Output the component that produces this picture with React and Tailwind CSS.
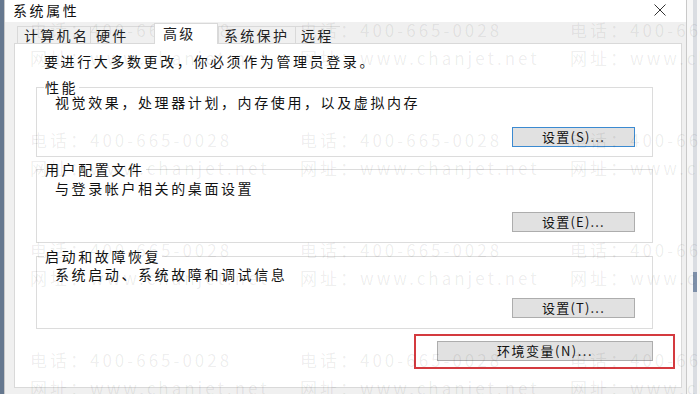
import React from "react";

const tabs = [
  { label: "计算机名", w: "w-[73px]", pl: "pl-[6px]" },
  { label: "硬件", w: "w-[64px]", pl: "pl-[5px]" },
  { label: "高级", w: "w-[64px]", pl: "pl-[8px]", active: true },
  { label: "系统保护", w: "w-[77px]", pl: "pl-[5px]" },
  { label: "远程", w: "w-[45px]", pl: "pl-[5px]" },
];

const Tab = ({ tab }) =>
  tab.active ? (
    <div
      className={`${tab.w} ${tab.pl} h-[21px] -mb-px relative z-10 bg-white border border-b-0 border-[#d9d9d9] leading-[18px]`}
    >
      {tab.label}
    </div>
  ) : (
    <div
      className={`${tab.w} ${tab.pl} h-[17px] bg-[#f0f0f0] border border-b-0 border-r-0 border-[#d9d9d9] leading-[16px]`}
    >
      {tab.label}
    </div>
  );

const SettingsButton = ({ children, focused }) => (
  <button
    className={`w-[123px] h-[20px] self-end mr-[17px] bg-[#e1e1e1] border text-[13px] tracking-[1.2px] leading-[18px] ${
      focused ? "border-[#3b8ad1]" : "border-[#adadad]"
    }`}
  >
    {children}
  </button>
);

const Group = ({ title, desc, button, focused, className, descGap, btnGap, pb }) => (
  <fieldset
    className={`border border-[#dcdcdc] flex flex-col ${className} ${pb}`}
  >
    <legend className="ml-[7px] px-[1px] leading-[18px]">{title}</legend>
    <div className={`ml-[18px] leading-[18px] ${descGap}`}>{desc}</div>
    <div className={`flex flex-col ${btnGap}`}>
      <SettingsButton focused={focused}>{button}</SettingsButton>
    </div>
  </fieldset>
);

const Watermark = () => {
  const cells = Array.from({ length: 12 });
  return (
    <div className="absolute inset-0 pointer-events-none pl-[30px] pt-[19px] grid grid-cols-[repeat(3,270px)] auto-rows-[110px] text-[17px] tracking-[3px] text-black/[0.075] whitespace-nowrap">
      {cells.map((_, i) => (
        <div key={i} className="flex flex-col gap-[6px] leading-[22px]">
          <span>电话：400-665-0028</span>
          <span>网址：www.chanjet.net</span>
        </div>
      ))}
    </div>
  );
};

const App = () => {
  return (
    <div className="relative w-[700px] h-[394px] overflow-hidden bg-white flex font-['Noto_Sans_CJK_SC',sans-serif] text-[14px] tracking-[2.6px] text-[#111]">
      {/* left edge of the window behind */}
      <div className="w-[4px] bg-[#66788f]" />

      <div className="flex-1 flex flex-col border-l border-r border-[#c9c9c9] bg-[#f0f0f0]">
        {/* title bar */}
        <div className="h-[22px] bg-white flex items-center justify-between pl-[8px] pr-[20px] pb-[3px]">
          <span className="leading-[18px]">系统属性</span>
          <svg width="12" height="12" viewBox="0 0 12 12">
            <path d="M0.5 0.5 L11.5 11.5 M11.5 0.5 L0.5 11.5" stroke="#333" strokeWidth="1" />
          </svg>
        </div>

        {/* tabs */}
        <div className="flex items-end h-[21px] pl-[12px] text-[#222] tracking-[2.3px]">
          {tabs.map((t) => (
            <Tab key={t.label} tab={t} />
          ))}
        </div>

        {/* tab panel */}
        <div className="flex-1 ml-[9px] mr-[4px] mb-[6px] bg-white border border-[#d9d9d9] flex flex-col pl-[21px] pr-[28px]">
          <div className="mt-[8px] ml-[8px] leading-[18px]">
            要进行大多数更改，你必须作为管理员登录。
          </div>

          <Group
            title="性能"
            desc="视觉效果，处理器计划，内存使用，以及虚拟内存"
            button="设置(S)..."
            focused
            className="mt-[8px]"
            descGap="-mt-[3px]"
            btnGap="mt-[16px]"
            pb="pb-[9px]"
          />

          <Group
            title="用户配置文件"
            desc="与登录帐户相关的桌面设置"
            button="设置(E)..."
            className="mt-[3px]"
            descGap="mt-[1px]"
            btnGap="mt-[15px]"
            pb="pb-[10px]"
          />

          <Group
            title="启动和故障恢复"
            desc="系统启动、系统故障和调试信息"
            button="设置(T)..."
            className="mt-[4px]"
            descGap="mt-0"
            btnGap="mt-[15px]"
            pb="pb-[10px]"
          />

          <div className="self-end -mr-[22px] mt-[5px] w-[261px] h-[35px] border-2 border-[#d43a3f] pl-[21px] pr-[20px] pt-[4px]">
            <button className="w-full h-[20px] bg-[#e1e1e1] border border-[#adadad] text-[13px] tracking-[1.5px] leading-[18px]">
              环境变量(N)...
            </button>
          </div>
        </div>
      </div>

      {/* edge of another window on the right */}
      <div className="w-[13px] bg-[#f7f7f7] flex">
        <div className="ml-[6px] w-[4px] bg-[#dadde2] flex flex-col">
          <div className="mt-[272px] h-[20px] bg-[#7d8fa8]" />
        </div>
      </div>

      <Watermark />
    </div>
  );
};

export default App;
